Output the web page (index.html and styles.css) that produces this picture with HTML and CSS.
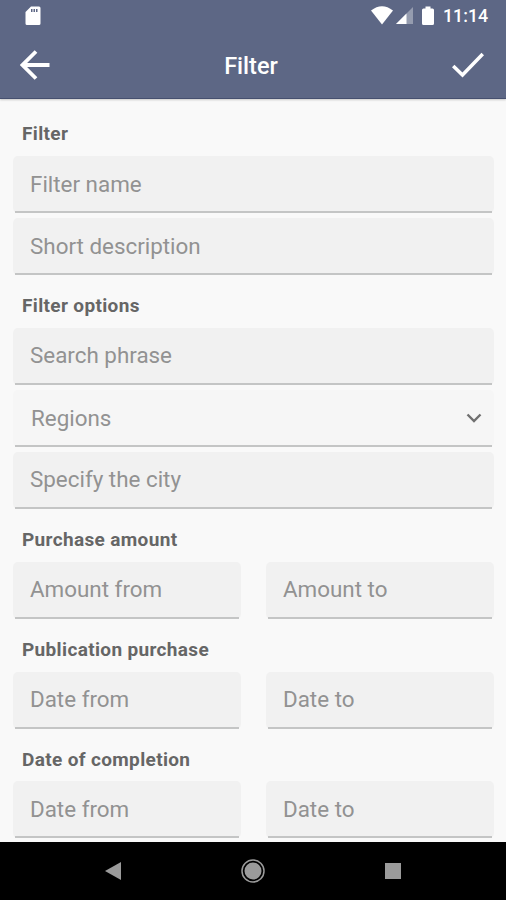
FILE: index.html
```html
<!DOCTYPE html>
<html lang="en">
<head>
    <meta charset="UTF-8">
    <meta name="viewport" content="width=device-width, initial-scale=1.0">
    <title>Filter</title>
    <link rel="stylesheet" href="styles.css">
</head>
<body>
    <header>
        <div class="status-bar">
            <svg class="sd-card" width="16" height="20" viewBox="0 0 16 20">
                <path fill="#fff" fill-rule="evenodd" d="M6 0.5H14Q15.500 0.500 15.500 2V17.500Q15.500 19 14 19H2Q0.500 19 0.500 17.500V6ZM6 3V6H7.500V3ZM8.500 3V6H10V3ZM11 3V6H12.500V3Z"/>
            </svg>
            <svg width="22" height="19" viewBox="0 0 22 19">
                <path fill="#fff" d="M0 4.500Q11 -4 22 4.500L11 18.500Z"/>
            </svg>
            <svg class="signal" width="18" height="18" viewBox="0 0 18 18">
                <path fill="#fff" fill-opacity="0.35" d="M17 0V17H0Z"/>
                <path fill="#fff" d="M10.500 6.500V17H0Z"/>
            </svg>
            <svg class="battery" width="12" height="20" viewBox="0 0 12 20">
                <path fill="#fff" d="M3.500 0.500H8.500V2.500H10.500Q12 2.500 12 4V17.500Q12 19 10.500 19H1.500Q0 19 0 17.500V4Q0 2.500 1.500 2.500H3.500Z"/>
            </svg>
            <span class="time">11:14</span>
        </div>
        <div class="toolbar">
            <svg width="30" height="30" viewBox="0 0 30 30">
                <path fill="none" stroke="#fff" stroke-width="3.800" d="M29.500 15H3M16 1.500L2.500 15L16 28.500"/>
            </svg>
            <h1>Filter</h1>
            <svg width="32" height="26" viewBox="0 0 32 26">
                <path fill="none" stroke="#fff" stroke-width="3.600" d="M1.200 14L10.500 23L30.800 2"/>
            </svg>
        </div>
    </header>
    <main>
        <section>
            <h2>Filter</h2>
            <div class="field">Filter name</div>
            <div class="field">Short description</div>
        </section>
        <section>
            <h2>Filter options</h2>
            <div class="field">Search phrase</div>
            <div class="field select">
                Regions
                <svg width="16" height="10" viewBox="0 0 16 10">
                    <path fill="none" stroke="#707070" stroke-width="2.400" d="M1.500 1.500L8 8L14.500 1.500"/>
                </svg>
            </div>
            <div class="field">Specify the city</div>
        </section>
        <section>
            <h2>Purchase amount</h2>
            <div class="row">
                <div class="field">Amount from</div>
                <div class="field">Amount to</div>
            </div>
        </section>
        <section>
            <h2>Publication purchase</h2>
            <div class="row">
                <div class="field">Date from</div>
                <div class="field">Date to</div>
            </div>
        </section>
        <section>
            <h2>Date of completion</h2>
            <div class="row">
                <div class="field">Date from</div>
                <div class="field">Date to</div>
            </div>
        </section>
    </main>
    <nav>
        <svg width="24" height="24" viewBox="0 0 24 24">
            <path fill="#9b9b9b" d="M4 12L20 3V21Z"/>
        </svg>
        <svg width="24" height="24" viewBox="0 0 24 24">
            <circle cx="12" cy="12" r="11" fill="none" stroke="#9b9b9b" stroke-width="1.500"/>
            <circle cx="12" cy="12" r="8.500" fill="#9b9b9b"/>
        </svg>
        <svg width="24" height="24" viewBox="0 0 24 24">
            <rect x="4" y="4" width="16" height="16" fill="#9b9b9b"/>
        </svg>
    </nav>
</body>
</html>
```
FILE: styles.css
```css
* {
    box-sizing: border-box;
}
body {
    font-family: Roboto, sans-serif;
    background: #f9f9f9;
    margin: 0;
    height: 900px;
    display: flex;
    flex-direction: column;
    overflow: hidden;
}
svg {
    display: block;
    flex: none;
}
header {
    background: #5d6785;
    color: #fff;
    height: 99px;
    flex: none;
    border-bottom: 1px solid #46506f;
    box-shadow: 0 1px 2px rgba(0, 0, 0, 0.2);
}
.status-bar {
    display: flex;
    align-items: center;
    height: 31px;
    padding: 0 18px 0 25px;
}
.sd-card {
    margin-right: auto;
}
.signal {
    margin-left: 3px;
}
.battery {
    margin-left: 8px;
}
.time {
    margin-left: 9px;
    width: 45px;
    font-size: 17.8px;
    font-weight: 500;
    white-space: nowrap;
}
.toolbar {
    display: flex;
    align-items: center;
    justify-content: space-between;
    height: 68px;
    padding: 0 22px 0 20px;
}
h1 {
    margin: 0;
    padding-top: 2px;
    font-size: 23.5px;
    font-weight: 500;
}
main {
    flex: 1;
    min-height: 0;
    padding: 4.4px 12px 0 13px;
}
h2 {
    margin: 0;
    height: 52.8px;
    padding: 20px 9px 0;
    font-size: 19px;
    line-height: 22px;
    font-weight: 700;
    letter-spacing: 0.35px;
    color: #666;
}
.field {
    position: relative;
    display: flex;
    align-items: center;
    height: 57px;
    padding: 0 17px 2px;
    background: #f1f1f1;
    border-radius: 5px;
    color: #929292;
    font-size: 22.4px;
}
.field + .field {
    margin-top: 5px;
}
/* underline is a little narrower than the box */
.field::after {
    content: "";
    position: absolute;
    left: 2px;
    right: 2px;
    bottom: 0;
    height: 2px;
    background: #c4c5c5;
}
.select {
    justify-content: space-between;
    padding: 0 12px 1px 18px;
    background: #f6f6f6;
}
.row {
    display: grid;
    grid-template-columns: 1fr 1fr;
    gap: 25px;
}
.row .field {
    margin: 0;
}
nav {
    display: flex;
    justify-content: center;
    align-items: center;
    gap: 116px;
    height: 58px;
    flex: none;
    background: #000;
}
```
